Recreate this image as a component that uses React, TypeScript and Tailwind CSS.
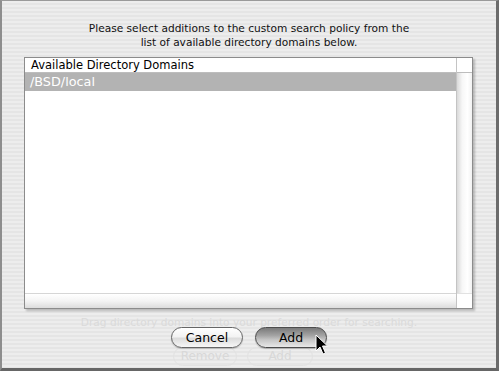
import React from "react";

export default function App() {
  const font = { fontFamily: '"DejaVu Sans", "Liberation Sans", sans-serif' };
  return (
    <div
      className="relative w-[499px] h-[371px] overflow-hidden border-t border-t-[#9a9a9a] border-l-2 border-l-[#8e8e8e] border-r-[3px] border-r-[#6c6c6c] border-b-[3px] border-b-[#666666] bg-[repeating-linear-gradient(180deg,#ededed_0px,#ededed_2px,#e5e5e5_2px,#e5e5e5_4px)]"
      style={font}
    >
      <div className="pt-[20px] text-center text-[10.6px] leading-[14px] text-[#111111]">
        <div>Please select additions to the custom search policy from the</div>
        <div>list of available directory domains below.</div>
      </div>

      <div className="ml-[22px] mt-[8px] w-[449px] h-[252px] border border-[#8c8c8c] bg-white flex shadow-[2px_2px_2px_rgba(0,0,0,0.22)]">
        <div className="flex-1 flex flex-col">
          <div className="h-[15px] border-b border-[#bdbdbd] pl-[6px] text-[11.5px] leading-[15px] text-black">
            Available Directory Domains
          </div>
          <div className="h-[18px] bg-[#b3b3b3] pl-[5px] text-[12.8px] leading-[18px] text-white">
            /BSD/local
          </div>
          <div className="flex-1" />
          <div className="h-[15px] border-t border-[#d6d6d6] bg-[linear-gradient(180deg,#ffffff_0%,#f4f4f4_50%,#dcdcdc_100%)]" />
        </div>
        <div className="w-[16px] flex flex-col border-l border-[#c4c4c4]">
          <div className="h-[15px] border-b border-[#bdbdbd] bg-white" />
          <div className="flex-1 bg-[linear-gradient(90deg,#d9d9d9_0%,#f7f7f7_35%,#ffffff_70%,#f2f2f2_100%)]" />
          <div className="h-[15px] bg-white border-t border-[#e2e2e2]" />
        </div>
      </div>

      <div className="relative mt-[6px]">
        <div className="absolute left-0 right-0 top-0 text-center text-[10.6px] leading-[14px] text-[#dadada]">
          Drag directory domains into your preferred order for searching.
        </div>
        <div className="absolute left-[171px] top-[32px] w-[64px] h-[19px] rounded-full border border-[#e2e2e2] text-center text-[12px] leading-[17px] text-[#d8d8d8]">
          Remove
        </div>
        <div className="absolute left-[245px] top-[32px] w-[66px] h-[19px] rounded-full border border-[#e2e2e2] text-center text-[12px] leading-[17px] text-[#d8d8d8]">
          Add
        </div>
        <div className="relative flex justify-center gap-[12px] pt-[12px]">
          <div className="w-[72px] h-[21px] rounded-full border border-[#666666] bg-[linear-gradient(180deg,#ffffff_0%,#f3f3f3_45%,#dcdcdc_55%,#f7f7f7_100%)] text-center text-[12.5px] leading-[19px] text-black shadow-[0_1px_1px_rgba(0,0,0,0.2)]">
            Cancel
          </div>
          <div className="w-[72px] h-[21px] rounded-full border border-[#4c4c4c] bg-[linear-gradient(180deg,#7a7a7a_0%,#a4a4a4_40%,#c3c3c3_60%,#e8e8e8_100%)] text-center text-[12.5px] leading-[19px] text-black shadow-[0_1px_1px_rgba(0,0,0,0.25)]">
            Add
          </div>
        </div>
      </div>

      <svg
        className="absolute left-[313px] top-[333px]"
        width="14"
        height="22"
        viewBox="0 0 14 22"
      >
        <path
          d="M1 1 L1 17 L5 13 L8 20 L10.5 19 L7.5 12 L12.5 12 Z"
          fill="#000"
          stroke="#fff"
          strokeWidth="1"
          strokeLinejoin="round"
        />
      </svg>
    </div>
  );
}
